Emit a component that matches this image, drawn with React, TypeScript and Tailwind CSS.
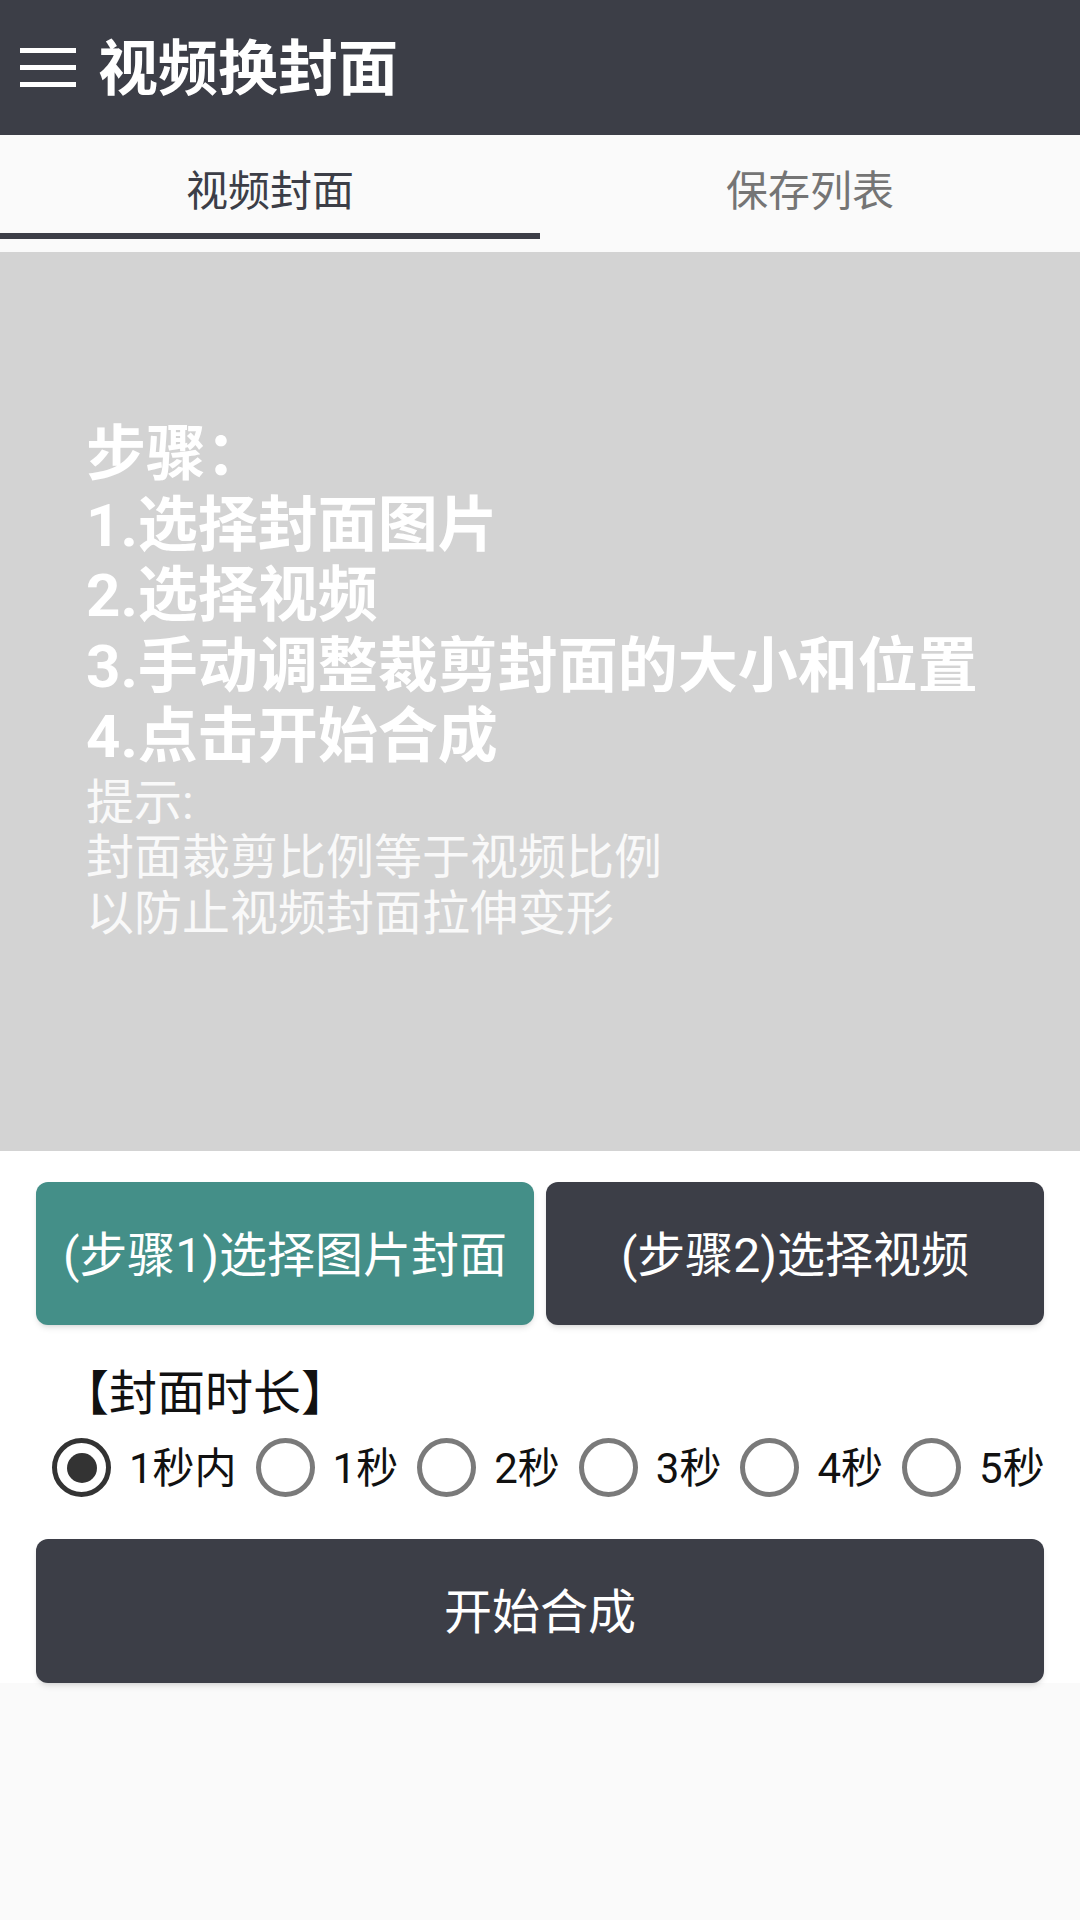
import React from 'react';

const durations = ['1秒内', '1秒', '2秒', '3秒', '4秒', '5秒'];

const Radio: React.FC<{ checked: boolean; label: string }> = ({ checked, label }) => (
  <div className="flex items-center gap-[18px] shrink-0">
    <div
      className={`w-[59px] h-[59px] shrink-0 rounded-full border-[5px] flex items-center justify-center ${
        checked ? 'border-[#333333]' : 'border-[#7a7a7a]'
      }`}
    >
      {checked && <div className="w-[30px] h-[30px] rounded-full bg-[#333333]" />}
    </div>
    <span className="text-[42px] leading-none whitespace-nowrap text-[#111111] pt-[3px]">{label}</span>
  </div>
);

const App: React.FC = () => {
  const font = { fontFamily: 'Roboto, "Noto Sans CJK SC", "Noto Sans", sans-serif' };
  return (
    <div className="w-[1080px] min-h-[1920px] bg-[#fafafa]" style={font}>
      {/* toolbar */}
      <div className="h-[135px] bg-[#3c3e47] flex items-center pl-[20px]">
        <div className="flex flex-col gap-[12px]">
          <div className="w-[56px] h-[5px] bg-white" />
          <div className="w-[56px] h-[5px] bg-white" />
          <div className="w-[56px] h-[5px] bg-white" />
        </div>
        <h1 className="ml-[22px] text-[60px] font-bold text-white leading-none pt-[4px]">视频换封面</h1>
      </div>

      {/* tabs */}
      <div className="flex h-[104px] bg-[#fafafa]">
        <div className="flex-1 flex flex-col">
          <div className="flex-1 flex items-center justify-center pt-[16px]">
            <span className="text-[42px] leading-none text-[#3c3e47]">视频封面</span>
          </div>
          <div className="h-[6px] bg-[#3c3e47]" />
        </div>
        <div className="flex-1 flex flex-col">
          <div className="flex-1 flex items-center justify-center pt-[16px]">
            <span className="text-[42px] leading-none text-[#757575]">保存列表</span>
          </div>
          <div className="h-[6px]" />
        </div>
      </div>
      <div className="h-[13px]" />

      {/* preview area */}
      <div className="h-[899px] bg-[#d3d3d3] pl-[86px] pt-[168px] text-white">
        <div className="text-[60px] font-bold leading-[70.5px]">
          <p>步骤：</p>
          <p>1.选择封面图片</p>
          <p>2.选择视频</p>
          <p>3.手动调整裁剪封面的大小和位置</p>
          <p>4.点击开始合成</p>
        </div>
        <div className="mt-[2px] text-[48px] leading-[55.5px] text-[#f9f9f9]">
          <p>提示:</p>
          <p>封面裁剪比例等于视频比例</p>
          <p>以防止视频封面拉伸变形</p>
        </div>
      </div>

      {/* controls */}
      <div className="bg-white px-[36px] pt-[31px]">
        <div className="grid grid-cols-2 gap-[12px]">
          <button className="h-[143px] rounded-[12px] bg-[#448f88] text-white text-[48px] pt-[4px] shadow-md">
            (步骤1)选择图片封面
          </button>
          <button className="h-[143px] rounded-[12px] bg-[#3c3e47] text-white text-[48px] pt-[4px] shadow-md">
            (步骤2)选择视频
          </button>
        </div>

        <p className="mt-[40px] pl-[25px] text-[48px] leading-[52px] text-[#111111] pt-[3px]">【封面时长】</p>

        <div className="mt-[18px] pl-[16px] flex items-center gap-[19px]">
          {durations.map((d, i) => (
            <Radio key={d + i} checked={i === 0} label={d} />
          ))}
        </div>

        <button className="mt-[42px] w-full h-[144px] rounded-[12px] bg-[#3c3e47] text-white text-[48px] pt-[4px] shadow-md">
          开始合成
        </button>
      </div>
    </div>
  );
};

export default App;
